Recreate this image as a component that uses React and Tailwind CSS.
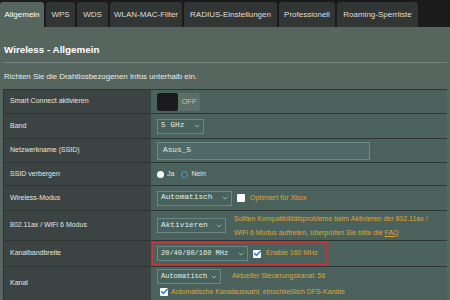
import { ChevronDown, Check } from 'lucide-react';

const tabs = [
    ['Allgemein', 44],
    ['WPS', 29],
    ['WDS', 31],
    ['WLAN-MAC-Filter', 72],
    ['RADIUS-Einstellungen', 93],
    ['Professionell', 56],
    ['Roaming-Sperrliste', 81],
];

function Select({ label, width, small }) {
    return (
        <div className={`flex items-center justify-between h-[15px] ${width} bg-[#48625d] border border-[#6b8782] pl-[3px] pr-[2px] text-[#e6ecea] font-['Liberation_Mono'] whitespace-nowrap ${small ? 'text-[7px]' : 'text-[7.8px]'}`}>
            <span>{label}</span>
            <ChevronDown className="h-[8px] w-[8px] shrink-0 text-[#c7d3d0]" strokeWidth={2} />
        </div>
    );
}

function Box({ checked }) {
    return (
        <span className="relative inline-flex h-[8px] w-[8px] shrink-0 items-center justify-center rounded-[1px] bg-white">
            {checked && <Check className="absolute h-[9px] w-[9px] text-[#2b7fd6] -top-[1px]" strokeWidth={4} />}
        </span>
    );
}

function Row({ label, h, children }) {
    return (
        <div className={`grid grid-cols-[147px_1fr] border-t border-[#2d3633] ${h}`}>
            <div className="flex items-center bg-[#3b4442] pl-[6px] text-[7px] text-[#e4e4e4]">{label}</div>
            <div className="flex items-center bg-[#4b625c] pl-[6px] gap-[5px]">{children}</div>
        </div>
    );
}

export default function App() {
    return (
        <div className="w-[450px] h-[300px] overflow-hidden bg-[#56665f] font-['Liberation_Sans',sans-serif]">
            {/* Tab bar */}
            <div className="flex h-[27px] items-end gap-[2px] bg-[#1b1b1b]">
                {tabs.map(([t, w], i) => (
                    <div
                        key={t}
                        className={`flex h-[25px] shrink-0 items-center justify-center whitespace-nowrap rounded-t-[3px] text-[8px] ${i === 0 ? 'bg-[#56665f] text-white' : 'bg-[#313634] text-[#dedede]'}`}
                        style={{ width: w }}
                    >
                        {t}
                    </div>
                ))}
            </div>

            <div className="px-[3px]">
                <div className="flex h-[35px] items-end pb-[4px] pl-[1px] text-[9.8px] font-bold text-white">Wireless - Allgemein</div>
                <div className="h-px bg-[#74837e]" />
                <div className="flex h-[26px] items-center pl-[1px] pt-[2px] text-[7.9px] text-[#e8e8e8]">
                    Richten Sie die Drahtlosbezogenen Infos unterhalb ein.
                </div>

                <div className="border-l border-[#2d3633]">
                    <Row label="Smart Connect aktivieren" h="h-[24px]">
                        <div className="flex h-[18px] w-[43px] overflow-hidden rounded-[2px] bg-[#5e6f6a]">
                            <div className="w-[21px] rounded-[2px] bg-[#1d1a1d]" />
                            <div className="flex flex-1 items-center justify-center text-[7.5px] text-[#b9c4c1]">OFF</div>
                        </div>
                    </Row>
                    <Row label="Band" h="h-[25px]">
                        <Select label="5 GHz" width="w-[47px]" />
                    </Row>
                    <Row label="Netzwerkname (SSID)" h="h-[24px]">
                        <div className="flex h-[18px] w-[213px] items-center border border-[#6e8a86] bg-[#4f6a66] pl-[5px] font-['Liberation_Mono'] text-[7.8px] text-[#e6ecea]">
                            Asus_5
                        </div>
                    </Row>
                    <Row label="SSID verbergen" h="h-[23px]">
                        <div className="flex items-center gap-[3px] text-[7px] text-[#e4e4e4]">
                            <span className="h-[7px] w-[7px] rounded-full bg-white" />
                            <span>Ja</span>
                            <span className="ml-[4px] h-[7px] w-[7px] rounded-full border-[1.5px] border-[#3fa2ea]" />
                            <span>Nein</span>
                        </div>
                    </Row>
                    <Row label="Wireless-Modus" h="h-[25px]">
                        <Select label="Automatisch" width="w-[75px]" />
                        <Box />
                        <span className="text-[7px] text-[#dca43c]">Optimiert für Xbox</span>
                    </Row>
                    <Row label="802.11ax / WiFi 6 Modus" h="h-[30px]">
                        <Select label="Aktivieren" width="w-[69px]" />
                        <div className="pl-[3px] text-[7px] leading-[14px] text-[#dca43c]">
                            <div>Sollten Kompatibilitätsprobleme beim Aktivieren der 802.11ax /</div>
                            <div>
                                WiFi 6 Modus auftreten, überprüfen Sie bitte die <span className="underline">FAQ</span>
                            </div>
                        </div>
                    </Row>
                    <div className="grid h-[26px] grid-cols-[147px_1fr] border-t border-[#2d3633]">
                        <div className="flex items-center bg-[#3b4442] pl-[6px] text-[7px] text-[#e4e4e4]">Kanalbandbreite</div>
                        <div className="flex items-center bg-[#4b625c] pl-[1px]">
                            <div className="flex h-[23px] w-[175px] items-center gap-[5px] border border-[#c2393c] pl-[4px]">
                                <Select label="20/40/80/160 MHz" width="w-[91px]" small />
                                <Box checked />
                                <span className="text-[7px] text-[#dca43c]">Enable 160 MHz</span>
                            </div>
                        </div>
                    </div>
                    <div className="grid h-[40px] grid-cols-[147px_1fr] border-t border-[#2d3633]">
                        <div className="flex items-center bg-[#3b4442] pl-[6px] pb-[6px] text-[7px] text-[#e4e4e4]">Kanal</div>
                        <div className="flex flex-col gap-[3px] bg-[#4b625c] pl-[6px] pt-[2px]">
                            <div className="flex items-center gap-[11px]">
                                <Select label="Automatisch" width="w-[64px]" small />
                                <span className="text-[7px] text-[#dca43c]">Aktueller Steuerungskanal: 56</span>
                            </div>
                            <div className="flex items-center gap-[3px] pl-[3px]">
                                <Box checked />
                                <span className="text-[7px] text-[#dca43c]">Automatische Kanalauswahl, einschließlich DFS-Kanäle</span>
                            </div>
                        </div>
                    </div>
                </div>
            </div>
        </div>
    );
}
